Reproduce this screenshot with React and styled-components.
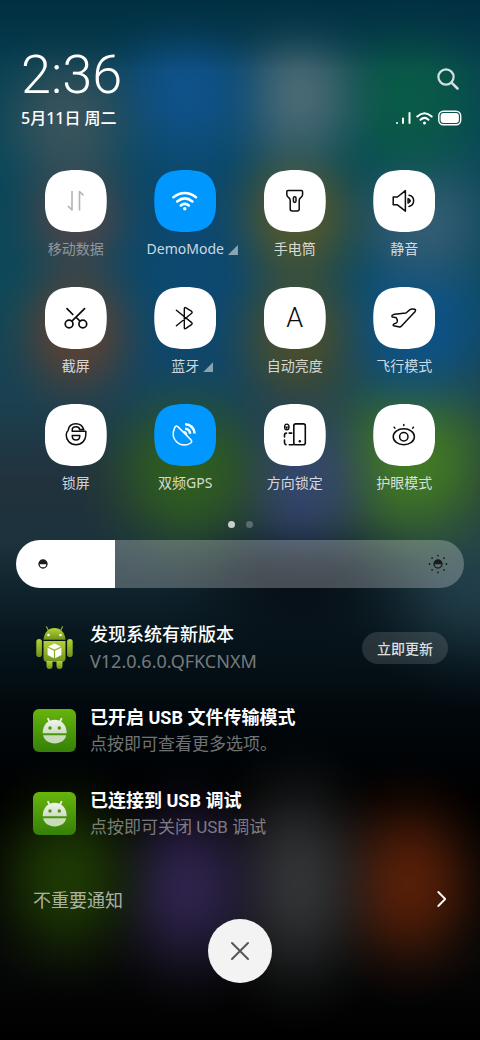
import React, { useState } from 'react'
import styled, { createGlobalStyle } from 'styled-components'

const GlobalStyle = createGlobalStyle`
    * {
        box-sizing: border-box;
    }
    body {
        margin: 0;
        background: #000;
        font-family: 'Noto Sans', 'Noto Sans CJK SC', sans-serif;
        color: white;
    }
    button {
        font: inherit;
        color: inherit;
        border: none;
        padding: 0;
        background: none;
        cursor: pointer;
    }
`

// soft spot of colour: centre x, centre y, radii, rgb, strength
const glow = (x, y, rx, ry, rgb, a) => {
    const stops = [[1, 0], [0.94, 15], [0.8, 30], [0.58, 45], [0.34, 60], [0.15, 75], [0.04, 90], [0, 100]]
    return `radial-gradient(${rx}px ${ry}px at ${x}% ${y}px, ${stops.map(([k, at]) => `rgba(${rgb},${(k * a).toFixed(3)}) ${at}%`).join(', ')})`
}

const glows = [
    glow(14, 120, 100, 100, '72,88,94', 0.75),
    glow(39, 90, 110, 110, '16,84,144', 0.9),
    glow(62, 95, 95, 110, '84,112,122', 0.85),
    glow(85, 100, 120, 130, '10,92,70', 0.95),
    glow(16, 215, 80, 90, '96,68,68', 0.75),
    glow(62, 215, 90, 100, '98,90,36', 0.85),
    glow(88, 220, 100, 100, '58,96,120', 0.85),
    glow(16, 330, 85, 100, '106,64,46', 0.85),
    glow(62, 335, 90, 110, '88,80,34', 0.8),
    glow(87, 325, 115, 120, '12,84,142', 0.9),
    glow(39, 472, 115, 115, '48,96,28', 0.95),
    glow(63, 480, 100, 110, '56,74,120', 0.8),
    glow(86, 462, 130, 130, '66,124,36', 0.98),
    glow(40, 270, 130, 260, '12,72,118', 0.85),
    glow(62, 585, 150, 90, '4,8,14', 0.7),
    glow(100, 580, 140, 130, '40,72,84', 0.7),
    glow(14, 878, 105, 125, '32,62,4', 0.9),
    glow(39, 888, 105, 130, '50,38,82', 0.9),
    glow(62, 882, 105, 150, '54,56,58', 0.9),
    glow(85, 884, 105, 125, '90,32,8', 0.95),
]

// blurred home screen behind the panel
const Shade = styled.main`
    min-height: 100vh;
    display: flex;
    flex-direction: column;
    padding: 48px 0 56px;
    background:
        linear-gradient(180deg, rgba(0,46,64,.9) 0, rgba(0,46,64,0) 70px),
        ${glows.join(',')},
        linear-gradient(180deg, #043a4c 0, #094658 150px, #0f4858 300px, #1b4050 400px, #22323c 480px, #1c323c 540px, #0e222b 595px, #07151c 640px, #01070b 720px, #000 800px, #060707 960px, #000 1040px);
`

const Header = styled.header`
    display: grid;
    grid-template-columns: 1fr auto;
    align-items: center;
    row-gap: 4px;
    padding: 0 18px 0 21px;
`
const Time = styled.time`
    font-family: Roboto, sans-serif;
    font-weight: 300;
    font-size: 54px;
    line-height: 54px;
`
const DateText = styled.span`
    font-size: 16px;
    font-weight: 500;
    line-height: 24px;
`
const SearchButton = styled.button`
    justify-self: end;
    height: 22px;
    padding-right: 3px;
    margin-top: 8px;
`
const Status = styled.div`
    display: flex;
    align-items: center;
    gap: 5px;
`

// Tiles : =========================
const Tiles = styled.section`
    display: grid;
    grid-template-columns: repeat(4, 1fr);
    row-gap: 28px;
    padding: 0 21px;
    margin-top: 40px;
`
const Tile = styled.button`
    display: flex;
    flex-direction: column;
    align-items: center;
    gap: 7px;
`
const Plate = styled.span`
    display: flex;
    align-items: center;
    justify-content: center;
    width: 62px;
    height: 62px;
    background: ${props => props.$on ? '#0098ff' : 'white'};
    color: ${props => props.$on ? 'white' : props.$dim ? '#b4b4b4' : '#0c0c0c'};
    clip-path: path('M0 31C0 8 8 0 31 0S62 8 62 31 54 62 31 62 0 54 0 31Z');
`
const Letter = styled.span`
    font-family: Roboto, sans-serif;
    font-weight: 300;
    font-size: 27px;
    line-height: 32px;
`
const Label = styled.span`
    position: relative;
    font-size: 14px;
    line-height: 20px;
    white-space: nowrap;
    color: rgba(255, 255, 255, ${props => props.$dim ? 0.45 : 0.8});
`
const Corner = styled.i`
    position: absolute;
    left: 100%;
    bottom: 4px;
    margin-left: 4px;
    width: 10px;
    height: 10px;
    background: rgba(255, 255, 255, 0.5);
    clip-path: polygon(100% 0, 100% 100%, 0 100%);
`

const Dots = styled.div`
    display: flex;
    justify-content: center;
    gap: 11px;
    margin-top: 28px;
`
const Dot = styled.span`
    width: 7px;
    height: 7px;
    border-radius: 50%;
    background: rgba(255, 255, 255, ${props => props.$active ? 0.75 : 0.25});
`

// Brightness : =========================
const Brightness = styled.label`
    position: relative;
    display: block;
    height: 48px;
    margin: 12px 16px 0;
    color: #1c1c1c;

    svg {
        position: absolute;
        top: 12px;
        pointer-events: none;
    }
    svg:first-of-type {
        left: 15px;
    }
    svg:last-of-type {
        right: 14px;
    }
`
const Range = styled.input`
    appearance: none;
    display: block;
    width: 100%;
    height: 100%;
    margin: 0;
    border-radius: 24px;
    cursor: pointer;

    &::-webkit-slider-thumb {
        appearance: none;
        width: 1px;
        height: 48px;
    }
`

// Notifications : =========================
const List = styled.ul`
    list-style: none;
    margin: 18px 0 0;
    padding: 0 32px 0 33px;
`
const Notice = styled.li`
    display: flex;
    align-items: center;
    gap: 14px;
    height: 83px;
`
const Infos = styled.div`
    flex: 1;
`
const Title = styled.h2`
    margin: 0;
    font-family: Roboto, 'Noto Sans CJK SC', sans-serif;
    font-size: 18px;
    font-weight: ${props => props.$strong ? 700 : 500};
    line-height: 27px;
`
const Desc = styled.p`
    margin: 0;
    font-family: Roboto, 'Noto Sans CJK SC', sans-serif;
    font-size: 17px;
    line-height: 27px;
    color: rgba(255, 255, 255, 0.45);
`
const Version = styled(Desc)`
    font-family: 'Noto Sans', sans-serif;
    font-size: 18px;
`
const UpdateButton = styled.button`
    width: 86px;
    height: 32px;
    border-radius: 16px;
    background: rgba(255, 255, 255, 0.13);
    color: rgba(255, 255, 255, 0.85);
    font-size: 14px;
    font-weight: 500;
`

const More = styled.button`
    display: flex;
    align-items: center;
    justify-content: space-between;
    height: 40px;
    margin-top: 24px;
    padding: 0 32px 0 33px;
    font-size: 18px;
    color: rgba(255, 255, 255, 0.65);
`
const Close = styled.button`
    display: flex;
    align-items: center;
    justify-content: center;
    align-self: center;
    width: 64px;
    height: 64px;
    border-radius: 50%;
    background: #f3f3f3;
    color: #555;
`

const Glyph = ({ width = 1.5, children }) => (
    <svg width="62" height="62" viewBox="0 0 62 62" fill="none" stroke="currentColor"
        strokeWidth={width} strokeLinecap="round" strokeLinejoin="round" aria-hidden="true">
        {children}
    </svg>
)

const icons = {
    data: (
        <Glyph width={1.6}>
            <path d="M27 21v19l-4-3.800M34.500 40.500V21.500l4 3.800" strokeLinecap="butt" />
        </Glyph>
    ),
    wifi: (
        <Glyph width={2.6}>
            <path d="M19.400 27.200Q30.800 18.800 42 27.200M23.200 31.400Q30.800 25.400 38.400 31.400M26.800 35.400Q30.800 32.200 34.800 35.400" />
            <circle cx="30.800" cy="38.800" r="1.700" fill="currentColor" stroke="none" />
        </Glyph>
    ),
    torch: (
        <Glyph>
            <path d="M24 20.600h13.400q1.200 0 1.200 1.200v2.400q0 1.800-1.200 2.800l-1.200 1.100q-1 .9-1 2.300V39q0 2-2 2h-5q-2 0-2-2v-8.600q0-1.400-1-2.300L24 27q-1.200-1-1.200-2.800v-2.400q0-1.200 1.200-1.200Z" />
            <rect x="29.400" y="26.800" width="2.600" height="5.600" rx="1.300" />
        </Glyph>
    ),
    sound: (
        <Glyph>
            <path d="M20.200 27h4.200l8-6.400v20.600l-8-6.400h-4.200ZM36 25.200a5.700 5.700 0 0 1 0 11.200" />
            <path d="M35.200 28.300q2.300.9 2.300 2.500t-2.300 2.500Z" fill="currentColor" strokeWidth="1" />
        </Glyph>
    ),
    scissors: (
        <Glyph width={1.7}>
            <circle cx="24.100" cy="37" r="3.900" />
            <circle cx="37.800" cy="37" r="3.900" />
            <path d="m22 21.600 5.800 5.900M39.600 21.600 26.900 34.200M31.800 31l3.200 3.200" />
        </Glyph>
    ),
    bluetooth: (
        <Glyph width={1.4}>
            <path d="m22.400 23.300 15 12.100q1.400 1.200 0 2.300l-5.400 3.700q-1.700 1-1.700-1V21.900q0-2 1.700-1l5.400 3.300q1.500 1.100 0 2.300l-15 12.300" />
        </Glyph>
    ),
    plane: (
        <Glyph width={1.5}>
            <path d="m33 26 4-3.300q1-.9 2.200-.8l2.500.4q1.200.4.700 1.400-.4 1.100-1.200 1.900L28.300 39.300q-.7.800-1.700.700l-6-1.300q-.9-.7 0-1.500l2.800-1.400q1.300-.8 1-2l-.5-1.800q-.4-1.200-1.600-1.400l-2.800-.5q-1.200-1 0-1.900.8-.7 2-.9Z" />
        </Glyph>
    ),
    lock: (
        <Glyph>
            <path d="M38.800 25.500C37.500 21.800 34.600 19.700 31 19.700c-4.400 0-7.300 2.600-7.800 6.500-1.500 1.500-2 3.300-2 4.900 0 5.300 4.100 9.600 9.800 9.600s9.800-4.300 9.800-9.600v-3.900H27.200V26c0-2 1.700-3.200 3.800-3.200 1.900 0 3.300 1 3.700 2.700Z" />
            <path d="M27.200 31.500h7.600c0 2.900-1.500 4.600-3.800 4.600s-3.800-1.700-3.800-4.600Z" />
        </Glyph>
    ),
    dish: (
        <Glyph>
            <path d="M23.800 22.600 36.900 35.700q1.700 2-.2 3.300c-4.300 3.100-10.300 2.700-14-1-3.600-3.600-4.400-8.800-2.200-13.900q1.200-3 3.300-1.500Z" />
            <path d="M31.200 20.200a9.500 9.500 0 0 1 9.400 9.400M31.200 24.800a5 5 0 0 1 4.900 4.900" strokeWidth="2.600" strokeLinecap="butt" />
            <path d="M29.600 27.600q2.400.2 3 3" />
        </Glyph>
    ),
    rotate: (
        <Glyph width={1.600}>
            <rect x="29.800" y="19.900" width="11.500" height="20.800" rx="2" />
            <circle cx="35.800" cy="37.200" r="1.200" fill="currentColor" stroke="none" />
            <path d="M27.800 29.100h-2.600M22.500 29.100q-2 0-2 2v1.900M20.500 36v2.700q0 1.600 1.500 2M25.300 40.700h4" />
            <ellipse cx="22.800" cy="23" rx="2.200" ry="2.900" strokeWidth="1.300" />
            <path d="M20.200 22.400h5.200v1.200h-5.200ZM22.200 23h1.200v2.500h-1.200Z" fill="currentColor" stroke="none" />
        </Glyph>
    ),
    eye: (
        <Glyph>
            <ellipse cx="30.800" cy="32.700" rx="10.600" ry="8" />
            <circle cx="30.800" cy="32.700" r="4.200" />
            <path d="M30.800 20.400v1.200M21.200 23.200l.7.900M40.400 23.200l-.7.900" />
        </Glyph>
    ),
}

const tiles = [
    { label: '移动数据', icon: icons.data, dim: true },
    { label: 'DemoMode', icon: icons.wifi, on: true, more: true },
    { label: '手电筒', icon: icons.torch },
    { label: '静音', icon: icons.sound },
    { label: '截屏', icon: icons.scissors },
    { label: '蓝牙', icon: icons.bluetooth, more: true },
    { label: '自动亮度', icon: <Letter>A</Letter> },
    { label: '飞行模式', icon: icons.plane },
    { label: '锁屏', icon: icons.lock },
    { label: '双频GPS', icon: icons.dish, on: true },
    { label: '方向锁定', icon: icons.rotate },
    { label: '护眼模式', icon: icons.eye },
]

const SunIcon = ({ rays }) => (
    <svg width="24" height="24" viewBox="0 0 24 24" aria-hidden="true">
        <circle cx="12" cy="12" r="4" fill="none" stroke="currentColor" strokeWidth="1.300" />
        <path d="M7.800 12.300a4.200 4.200 0 1 1 8.400 0Z" fill="currentColor" />
        {rays && [0, 45, 90, 135, 180, 225, 270, 315].map((deg) =>
            <circle key={deg} cx="12" cy="3.600" r=".9" fill="currentColor" transform={`rotate(${deg} 12 12)`} />
        )}
    </svg>
)

const UpdaterIcon = () => (
    <svg width="43" height="43" viewBox="0 0 43 43" aria-hidden="true">
        <defs>
            <linearGradient id="robot" x1="0" y1="0" x2="0" y2="1">
                <stop offset="0" stopColor="#b4d334" />
                <stop offset="1" stopColor="#6f921c" />
            </linearGradient>
        </defs>
        <path d="m13.500.8 2 4M29.500.8l-2 4" stroke="#8fae2a" strokeWidth="1.200" strokeLinecap="round" />
        <g fill="url(#robot)">
            <path d="M10.500 13.800C11 6.500 15.500 2 21.500 2s10.500 4.500 11 11.800Z" />
            <path d="M10.500 15h22v17q0 4-4 4h-14q-4 0-4-4Z" />
            <rect x="3.300" y="13" width="5.600" height="18" rx="2.800" />
            <rect x="34.100" y="13" width="5.600" height="18" rx="2.800" />
            <path d="M13.500 35h6v5q0 3-3 3t-3-3ZM23.500 35h6v5q0 3-3 3t-3-3Z" />
        </g>
        <circle cx="15.500" cy="9" r="1.300" fill="white" />
        <circle cx="27.500" cy="9" r="1.300" fill="white" />
        <path d="m21.500 17.600 6.400 2.900-6.400 3.100-6.400-3.100ZM14.600 21.700l6.300 3.100v7.400l-6.300-3.100ZM28.400 21.700l-6.300 3.100v7.400l6.300-3.100Z" fill="white" />
    </svg>
)

const UsbIcon = () => (
    <svg width="43" height="43" viewBox="0 0 43 43" aria-hidden="true">
        <defs>
            <linearGradient id="tile" x1="0" y1="0" x2="0" y2="1">
                <stop offset="0" stopColor="#67b40c" />
                <stop offset="1" stopColor="#358008" />
            </linearGradient>
            <linearGradient id="face" x1="0" y1="0" x2="0" y2="1">
                <stop offset="0" stopColor="#f0f6ea" />
                <stop offset="1" stopColor="#cfdcc6" />
            </linearGradient>
        </defs>
        <rect width="43" height="43" rx="6" fill="url(#tile)" />
        <path d="m15 9.700 1.700 3.300M28.500 9.700 26.800 13" stroke="#edf4e6" strokeWidth="1.800" strokeLinecap="round" />
        <path d="M9.700 24.300C9.700 15.800 15 10.800 21.700 10.800s12 5 12 13.500Z" fill="url(#face)" />
        <path d="M10.200 26.200h23C32.500 31 27.500 34.400 21.700 34.400S10.900 31 10.200 26.200Z" fill="#c9dcba" />
        <circle cx="17" cy="19" r="1.700" fill="#4a960c" />
        <circle cx="26.300" cy="19" r="1.700" fill="#4a960c" />
    </svg>
)

const App = () => {

    const [level, setLevel] = useState(22)

    return (
        <Shade>
            <GlobalStyle />

            <Header>
                <Time>2:36</Time>
                <SearchButton aria-label="搜索">
                    <svg width="22" height="22" viewBox="0 0 22 22" fill="none" stroke="#d3e0de" strokeLinecap="round">
                        <circle cx="9" cy="9" r="7.600" strokeWidth="2.200" />
                        <path d="m14.800 14.800 5.700 5.700" strokeWidth="2.600" />
                    </svg>
                </SearchButton>
                <DateText>5月11日 周二</DateText>
                <Status>
                    <svg width="16" height="14" viewBox="0 0 16 14" stroke="white" strokeWidth="2" strokeLinecap="round">
                        <path d="M2 12v.1M8 12V7.500M14.500 12V2" />
                    </svg>
                    <svg width="17" height="14" viewBox="0 0 17 14" fill="none" stroke="white" strokeWidth="2" strokeLinecap="round">
                        <path d="M1.300 5.600Q8.500-1.200 15.700 5.600M4.500 8.800Q8.500 5 12.500 8.800" />
                        <circle cx="8.500" cy="11.900" r="1.500" fill="white" stroke="none" />
                    </svg>
                    <svg width="24" height="16" viewBox="0 0 24 16">
                        <rect x=".8" y="1.300" width="21.900" height="13.400" rx="4.500" fill="none" stroke="white" strokeWidth="1.400" />
                        <rect x="2.600" y="3" width="18.300" height="10" rx="3" fill="white" />
                    </svg>
                </Status>
            </Header>

            <Tiles>
                {tiles.map((item) =>
                    <Tile key={item.label}>
                        <Plate $on={item.on} $dim={item.dim}>{item.icon}</Plate>
                        <Label $dim={item.dim}>
                            {item.label}
                            {item.more && <Corner />}
                        </Label>
                    </Tile>
                )}
            </Tiles>

            <Dots>
                <Dot $active />
                <Dot />
            </Dots>

            <Brightness>
                <Range
                    type="range"
                    aria-label="亮度"
                    value={level}
                    onChange={(e) => setLevel(Number(e.target.value))}
                    style={{ background: `linear-gradient(90deg, white ${level}%, rgba(255,255,255,.25) ${level}%)` }}
                />
                <SunIcon />
                <SunIcon rays />
            </Brightness>

            <List>
                <Notice>
                    <UpdaterIcon />
                    <Infos>
                        <Title>发现系统有新版本</Title>
                        <Version>V12.0.6.0.QFKCNXM</Version>
                    </Infos>
                    <UpdateButton>立即更新</UpdateButton>
                </Notice>
                <Notice>
                    <UsbIcon />
                    <Infos>
                        <Title $strong>已开启 USB 文件传输模式</Title>
                        <Desc>点按即可查看更多选项。</Desc>
                    </Infos>
                </Notice>
                <Notice>
                    <UsbIcon />
                    <Infos>
                        <Title $strong>已连接到 USB 调试</Title>
                        <Desc>点按即可关闭 USB 调试</Desc>
                    </Infos>
                </Notice>
            </List>

            <More>
                不重要通知
                <svg width="12" height="18" viewBox="0 0 12 18" fill="none" stroke="white" strokeWidth="1.800" strokeLinecap="round" strokeLinejoin="round">
                    <path d="m2.300 2 6.900 7-6.900 7" />
                </svg>
            </More>

            <Close aria-label="关闭">
                <svg width="20" height="20" viewBox="0 0 20 20" stroke="currentColor" strokeWidth="2" strokeLinecap="round">
                    <path d="m2 2 16 16M18 2 2 18" />
                </svg>
            </Close>
        </Shade>
    )
}

export default App
